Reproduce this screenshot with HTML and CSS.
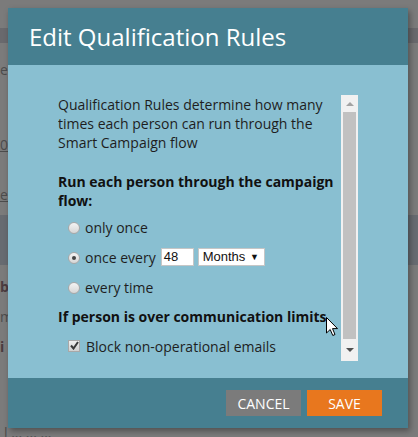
FILE: index.html
```html
<!DOCTYPE html>
<html lang="en">
<head>
    <meta charset="UTF-8">
    <title>Edit Qualification Rules</title>
    <link rel="stylesheet" href="styles.css">
</head>
<body>
    <!-- page behind the overlay -->
    <div class="page">
        <div class="page-band"></div>
        <div class="page-line l-name">e:</div>
        <div class="page-line l-date"><u>01</u></div>
        <div class="page-line l-link"><u>e .</u></div>
        <div class="page-band page-band2"></div>
        <div class="page-line l-b"><b>b</b></div>
        <div class="page-line l-m">m</div>
        <div class="page-line l-i"><b>i</b></div>
        <div class="page-line l-end">l ... ... ...</div>
    </div>

    <div class="modal">
        <div class="modal-header">
            <h2>Edit Qualification Rules</h2>
        </div>
        <div class="modal-body">
            <div class="panel">
                <div class="panel-content">
                    <p>Qualification Rules determine how many times each person can run through the Smart Campaign flow</p>
                    <h3>Run each person through the campaign flow:</h3>
                    <div class="opt"><span class="radio"></span>only once</div>
                    <div class="opt">
                        <span class="radio checked"></span>once every
                        <span class="num">48</span>
                        <span class="sel">Months <span class="arrow">&#9660;</span></span>
                    </div>
                    <div class="opt"><span class="radio"></span>every time</div>
                    <h3 class="limits">If person is over communication limits</h3>
                    <div class="opt opt-last">
                        <span class="check">
                            <svg width="9" height="9" viewBox="0 0 9 9"><path d="M1 4.5 L3.5 7.5 L8 1" fill="none" stroke="#3a3a3a" stroke-width="2"/></svg>
                        </span>Block non-operational emails
                    </div>
                </div>
                <div class="scrollbar">
                    <div class="sb-btn"><span class="tri-up"></span></div>
                    <div class="sb-thumb"></div>
                    <div class="sb-btn sb-down"><span class="tri-down"></span></div>
                </div>
            </div>
        </div>
        <div class="modal-footer">
            <button class="btn btn-cancel">CANCEL</button>
            <button class="btn btn-save">SAVE</button>
        </div>
    </div>

    <svg class="cursor" width="13" height="20" viewBox="0 0 13 20">
        <path d="M0.5 0.5 L0.5 16 L4.2 12.5 L6.8 18.5 L9 17.5 L6.5 11.6 L11.5 11.6 Z" fill="#fff" stroke="#000" stroke-width="1"/>
    </svg>
</body>
</html>
```

FILE: styles.css
```css
body {
    margin: 0;
    padding: 0;
    background-color: #7b7b7b;
    font-family: 'Open Sans', 'Noto Sans', sans-serif;
    overflow: hidden;
}
.page {
    padding-top: 28px;
    color: #4c4c4c;
    font-size: 14px;
}
.page-band {
    height: 15px;
    background-color: #69696d;
}
.page-band2 {
    height: 50px;
    background-color: #676b71;
    margin-top: 10px;
}
.page-line {
    line-height: 20px;
}
.l-name { margin-top: 17px; }
.l-date { margin-top: 55px; }
.l-link { margin-top: 30px; }
.l-b { margin-top: 12px; color: #4a3b3f; }
.l-m { margin-top: 10px; }
.l-i { margin-top: 10px; color: #4a3b3f; }
.l-end { margin-top: 66px; margin-left: 4px; }

.modal {
    position: absolute;
    left: 8px;
    top: 8px;
    width: 400px;
    box-shadow: 2px 3px 6px rgba(0, 0, 0, 0.35);
}
.modal-header {
    background-color: #467f90;
    height: 57px;
    padding-left: 21px;
}
.modal-header h2 {
    margin: 0;
    font-size: 24px;
    font-weight: 400;
    line-height: 57px;
    color: #ffffff;
}
.modal-body {
    background-color: #89bfd1;
    height: 313px;
    box-sizing: border-box;
    padding: 30px 0 0 50px;
}
.panel {
    display: flex;
    height: 266px;
    overflow: hidden;
}
.panel-content {
    width: 283px;
    color: #1e1e1e;
    font-size: 14px;
    line-height: 19px;
}
.panel-content p {
    margin: 0 0 20px 0;
}
.panel-content h3 {
    margin: 0 0 2px 0;
    font-size: 14px;
    font-weight: 700;
    line-height: 19px;
    color: #111;
}
.panel-content h3.limits {
    line-height: 30px;
    margin: 0;
    white-space: nowrap;
}
.opt {
    display: flex;
    align-items: center;
    height: 30px;
    padding-left: 10px;
}
.radio {
    width: 10px;
    height: 10px;
    border: 1px solid #a8a8a8;
    border-radius: 50%;
    background: linear-gradient(#f4f4f4, #d6d6d6);
    margin: 2px 5px 0 0;
    position: relative;
}
.radio.checked::after {
    content: "";
    position: absolute;
    left: 3px;
    top: 3px;
    width: 4px;
    height: 4px;
    border-radius: 50%;
    background-color: #444;
}
.num {
    width: 29px;
    height: 16px;
    border: 1px solid #c6c6c6;
    background-color: #fff;
    margin-left: 5px;
    padding-left: 2px;
    font-family: 'Liberation Sans', Arial, sans-serif;
    font-size: 13px;
    line-height: 16px;
    color: #111;
}
.sel {
    width: 61px;
    height: 16px;
    border: 1px solid #c6c6c6;
    background-color: #fff;
    margin-left: 4px;
    padding-left: 4px;
    font-family: 'Liberation Sans', Arial, sans-serif;
    font-size: 13px;
    line-height: 16px;
    color: #111;
}
.sel .arrow {
    font-size: 9px;
    margin-left: 1px;
    vertical-align: 1px;
}
.check {
    width: 10px;
    height: 10px;
    border: 1px solid #a8a8a8;
    background: linear-gradient(#f0f0f0, #d0d0d0);
    margin: -2px 6px 0 0;
    display: flex;
    align-items: center;
    justify-content: center;
}
.opt-last {
    height: 29px;
}

.scrollbar {
    width: 17px;
    background-color: #f1f1f1;
    display: flex;
    flex-direction: column;
}
.sb-btn {
    height: 17px;
    display: flex;
    align-items: center;
    justify-content: center;
}
.sb-down {
    flex: 1;
}
.sb-thumb {
    height: 227px;
    margin: 0 2px;
    background-color: #c1c1c1;
}
.tri-up {
    border-left: 4px solid transparent;
    border-right: 4px solid transparent;
    border-bottom: 4px solid #a3a3a3;
}
.tri-down {
    border-left: 4px solid transparent;
    border-right: 4px solid transparent;
    border-top: 4px solid #505050;
}

.modal-footer {
    background-color: #467f90;
    height: 50px;
    box-sizing: border-box;
    padding: 12px 26px 0 0;
    display: flex;
    justify-content: flex-end;
    gap: 6px;
}
.btn {
    width: 75px;
    height: 26px;
    border: none;
    padding: 0;
    color: #ffffff;
    font-family: 'Open Sans', 'Noto Sans', sans-serif;
    font-size: 14px;
    cursor: pointer;
}
.btn-cancel {
    background-color: #7b7b7b;
}
.btn-save {
    background-color: #e8771e;
}

.cursor {
    position: absolute;
    left: 326px;
    top: 317px;
}
```
